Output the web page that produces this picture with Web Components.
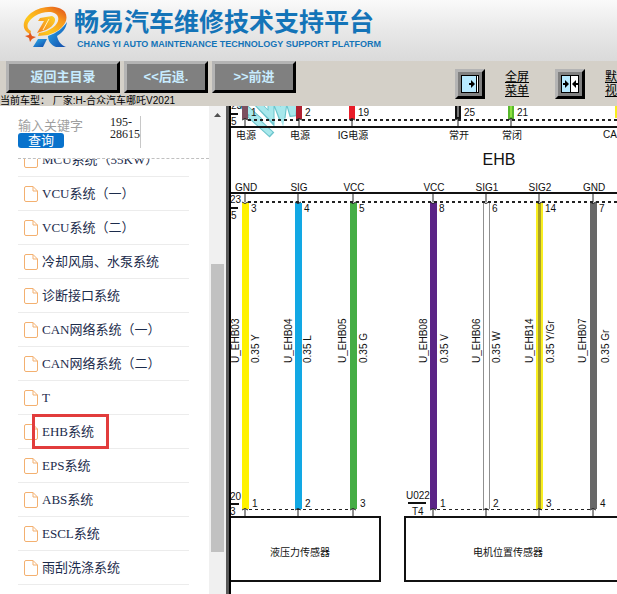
<!DOCTYPE html>
<html lang="zh-CN">
<head>
<meta charset="utf-8">
<meta name="viewport" content="width=device-width, initial-scale=1">
<title>畅易汽车维修技术支持平台</title>
<style>
  body {
    margin: 0;
    height: 100vh;
    overflow: hidden;
    background: #fff;
    font-family: "Liberation Sans", "Noto Sans CJK SC", sans-serif;
  }
</style>
</head>
<body>
<manual-app></manual-app>

<script>
// Header with the logo and the name of the platform
class ManualHeader extends HTMLElement {
  constructor() {
    super();
    this.attachShadow({ mode: 'open' });
  }

  connectedCallback() {
    this.shadowRoot.innerHTML = `
      <style>
        :host {
          display: flex;
          align-items: flex-start;
          gap: 5px;
          box-sizing: border-box;
          height: 61px;
          padding: 5px 0 0 22px;
          background: linear-gradient(#fafafa, #e8e8e8 50%, #dadada);
          color: #1474b8;
          white-space: nowrap;
        }
        svg { flex: none; width: 47px; height: 44px; }
        h1 {
          margin: 3px 0 0;
          font-size: 25px;
          line-height: 28px;
          font-weight: 700;
        }
        p {
          margin: 2px 0 0 3px;
          font-size: 9px;
          line-height: 12px;
          font-weight: 700;
        }
      </style>
      <svg viewBox="0 0 47 44" aria-hidden="true">
        <defs>
          <linearGradient id="sun" x1="0" y1="1" x2="1" y2="0">
            <stop offset="0" stop-color="#f6901c"/>
            <stop offset=".35" stop-color="#fdc81c"/>
            <stop offset=".7" stop-color="#f8981c"/>
            <stop offset="1" stop-color="#dc481c"/>
          </linearGradient>
          <linearGradient id="gold" x1="0" y1="1" x2="1" y2="0">
            <stop offset="0" stop-color="#f47c1c"/>
            <stop offset="1" stop-color="#fdd428"/>
          </linearGradient>
          <linearGradient id="sea" x1="0" y1="0" x2="1" y2="1">
            <stop offset="0" stop-color="#2bb0ee"/>
            <stop offset="1" stop-color="#1248a8"/>
          </linearGradient>
        </defs>
        <path fill="url(#sea)" d="M16 34h9l-4 8H11z"/>
        <path fill="url(#sea)" d="M45 17C44 24 40 28 35 31C36 36 39 40 44 42H34C29 40 26 36 26 31C35 28 41 23 45 17z"/>
        <path fill="url(#sun)" d="M8 29C-1 25 0 15 9 8C20 0 37 0 43 7C48 16 40 26 26 30L16 31L17 28C30 26 38 18 36 12C34 5 21 6 13 11C5 16 3 23 9 26z"/>
        <path fill="url(#gold)" d="M18 13L30 11C36 13 33 21 24 25L15 28L22 16H16z"/>
        <path fill="none" stroke="#fff3c4" d="M27 14l-6 11"/>
        <path fill="#e2571c" d="M8 27l2 4 4 1-4 2-2 3-1-4-4-2 4-1z"/>
      </svg>
      <div>
        <h1>畅易汽车维修技术支持平台</h1>
        <p>CHANG YI AUTO MAINTENANCE TECHNOLOGY SUPPORT PLATFORM</p>
      </div>
    `;
  }
}
customElements.define('manual-header', ManualHeader);

// Raised grey button. With the "icon" attribute it becomes a small square.
class BevelButton extends HTMLElement {
  constructor() {
    super();
    this.attachShadow({ mode: 'open' });
  }

  connectedCallback() {
    const label = this.getAttribute('label') ?? '';
    this.shadowRoot.innerHTML = `
      <style>
        :host { display: block; }
        button {
          display: flex;
          align-items: center;
          justify-content: center;
          box-sizing: border-box;
          width: 100%;
          height: 32px;
          padding: 0;
          border: 3px solid;
          border-color: #b4b4b4 #000 #000 #b4b4b4;
          background: #808080;
          color: #c8ecff;
          font: 700 13px/16px "Liberation Sans", "Noto Sans CJK SC", sans-serif;
        }
        :host([icon]) button { width: 30px; height: 30px; }
      </style>
      <button type="button" ${label ? `aria-label="${label}"` : ''}><slot></slot></button>
    `;
  }
}
customElements.define('bevel-button', BevelButton);

class ManualToolbar extends HTMLElement {
  constructor() {
    super();
    this.attachShadow({ mode: 'open' });
  }

  connectedCallback() {
    this.shadowRoot.innerHTML = `
      <style>
        :host {
          display: flex;
          justify-content: space-between;
          height: 45px;
          overflow: hidden;
          background: #d4d0c8;
          color: #000;
        }
        nav {
          display: grid;
          grid-template-columns: 114px 84px 84px;
          gap: 4px;
          padding-left: 6px;
        }
        p {
          margin: 2px 0 0;
          font-size: 10px;
          line-height: 12px;
        }
        .views {
          display: flex;
          align-items: flex-start;
          gap: 20px;
          padding-top: 8px;
        }
        .views bevel-button + a + bevel-button { margin-left: 6px; }
        a {
          margin-top: 1px;
          color: #000;
          font-size: 12px;
          line-height: 14px;
        }
      </style>
      <div>
        <nav>
          <bevel-button>返回主目录</bevel-button>
          <bevel-button>&lt;&lt;后退.</bevel-button>
          <bevel-button>&gt;&gt;前进</bevel-button>
        </nav>
        <p>当前车型： 厂家:H-合众汽车哪吒V2021</p>
      </div>
      <div class="views">
        <bevel-button icon label="全屏菜单">
          <svg width="18" height="18" viewBox="0 0 18 18">
            <rect width="18" height="18" fill="#000"/>
            <rect x="1" y="1" width="14" height="16" fill="#b8eaff"/>
            <rect x="16" y="1" width="1" height="16" fill="#fff"/>
            <path d="M8 8h2V5l4 4-4 4v-3H8z"/>
          </svg>
        </bevel-button>
        <a href="#full">全屏<br>菜单</a>
        <bevel-button icon label="默认视图">
          <svg width="18" height="18" viewBox="0 0 18 18">
            <rect width="18" height="18" fill="#000"/>
            <rect x="1" y="1" width="8" height="16" fill="#b8eaff"/>
            <rect x="10" y="1" width="7" height="16" fill="#fff"/>
            <path d="M2 8h2V5l4 4-4 4v-3H2zM17 8h-2V5l-4 4 4 4v-3h2z"/>
          </svg>
        </bevel-button>
        <a href="#default">默<br>视</a>
      </div>
    `;
  }
}
customElements.define('manual-toolbar', ManualToolbar);

// One entry of the circuit list. "marked" draws the red frame round it.
class CircuitItem extends HTMLElement {
  constructor() {
    super();
    this.attachShadow({ mode: 'open' });
  }

  connectedCallback() {
    this.shadowRoot.innerHTML = `
      <style>
        :host {
          display: block;
          position: relative;
          box-sizing: border-box;
          height: 34px;
          border-bottom: 1px solid #ececec;
        }
        a {
          display: flex;
          align-items: center;
          gap: 4px;
          height: 33px;
          padding-left: 6px;
          color: #1c2c4c;
          font: 13px/18px "Liberation Serif", "Noto Sans CJK SC", serif;
          text-decoration: none;
          white-space: nowrap;
        }
        :host([marked])::after {
          content: "";
          position: absolute;
          top: -1px;
          left: 14px;
          width: 71px;
          height: 29px;
          border: 3px solid #e23c3c;
        }
      </style>
      <a href="#circuit">
        <svg width="14" height="16" viewBox="0 0 14 16" fill="none" stroke="#f3b070" aria-hidden="true">
          <path d="M2 .5h7l4.500 4.500v9q0 1.500-1.500 1.500h-10q-1.500 0-1.500-1.500v-12q0-1.500 1.500-1.500zM9 .5v4.500h4.500"/>
        </svg>
        <slot></slot>
      </a>
    `;
  }
}
customElements.define('circuit-item', CircuitItem);

class ManualSidebar extends HTMLElement {
  constructor() {
    super();
    this.attachShadow({ mode: 'open' });
  }

  connectedCallback() {
    this.shadowRoot.innerHTML = `
      <style>
        :host {
          display: grid;
          grid-template-columns: 1fr 17px;
          width: 226px;
          min-height: 0;
          border-right: 3px solid #585858;
        }
        .panel {
          display: flex;
          flex-direction: column;
          min-height: 0;
          padding-left: 18px;
        }
        form {
          display: flex;
          gap: 12px;
          padding: 10px 0;
          border-bottom: 1px dashed #c0c0c0;
        }
        .field { width: 80px; padding-top: 2px; }
        input {
          display: block;
          box-sizing: border-box;
          width: 100%;
          height: 15px;
          padding: 0;
          border: 0;
          background: none;
          font: 13px/15px "Liberation Sans", "Noto Sans CJK SC", sans-serif;
        }
        input::placeholder { color: #a0a0a0; }
        button {
          display: block;
          width: 46px;
          height: 15px;
          padding: 0;
          border: 0;
          border-radius: 3px;
          background: #0872cc;
          color: #fff;
          font: 13px/15px "Liberation Sans", "Noto Sans CJK SC", sans-serif;
        }
        .range {
          width: 30px;
          height: 32px;
          border-right: 1px solid #c8c8c8;
          color: #222;
          font: 12px/12px "Liberation Serif", serif;
        }
        .scroller { flex: 1; min-height: 0; overflow: hidden; }
        /* the list is scrolled a little way into its first row */
        .list { margin: -16px 20px 0 0; }
        .bar {
          display: grid;
          grid-template-rows: 17px 141fr 288fr 42fr;
          justify-items: center;
          background: #f0f0f0;
        }
        .bar svg { align-self: center; }
        .thumb { grid-row: 3; width: 13px; background: #c1c1c1; }
      </style>
      <div class="panel">
        <form>
          <div class="field">
            <input type="text" placeholder="输入关键字" aria-label="输入关键字">
            <button type="button">查询</button>
          </div>
          <div class="range">195-28615</div>
        </form>
        <div class="scroller">
          <div class="list">
            <circuit-item>MCU系统（55KW）</circuit-item>
            <circuit-item>VCU系统（一）</circuit-item>
            <circuit-item>VCU系统（二）</circuit-item>
            <circuit-item>冷却风扇、水泵系统</circuit-item>
            <circuit-item>诊断接口系统</circuit-item>
            <circuit-item>CAN网络系统（一）</circuit-item>
            <circuit-item>CAN网络系统（二）</circuit-item>
            <circuit-item>T</circuit-item>
            <circuit-item marked>EHB系统</circuit-item>
            <circuit-item>EPS系统</circuit-item>
            <circuit-item>ABS系统</circuit-item>
            <circuit-item>ESCL系统</circuit-item>
            <circuit-item>雨刮洗涤系统</circuit-item>
          </div>
        </div>
      </div>
      <div class="bar" aria-hidden="true">
        <svg width="7" height="4" viewBox="0 0 7 4"><path fill="#505050" d="M3.500 0L7 4H0z"/></svg>
        <div class="thumb"></div>
      </div>
    `;
  }
}
customElements.define('manual-sidebar', ManualSidebar);

// pin is the number on the module, end the number on the sensor
const WIRES = [
  { x: 245, color: '#fff200', name: 'U_EHB03', size: '0.35 Y', pin: 3, end: 1, signal: 'GND', nameX: 239, sizeX: 259 },
  { x: 298, color: '#12a8e4', name: 'U_EHB04', size: '0.35 L', pin: 4, end: 2, signal: 'SIG', nameX: 292, sizeX: 311 },
  { x: 353, color: '#45ad45', name: 'U_EHB05', size: '0.35 G', pin: 5, end: 3, signal: 'VCC', nameX: 346, sizeX: 367 },
  { x: 433, color: '#5b2486', name: 'U_EHB08', size: '0.35 V', pin: 8, end: 1, signal: 'VCC', nameX: 427, sizeX: 448 },
  { x: 486, color: '#909090', core: '#fff', coreWidth: 5, name: 'U_EHB06', size: '0.35 W', pin: 6, end: 2, signal: 'SIG1', nameX: 480, sizeX: 500 },
  { x: 539, color: '#f8ee20', core: '#aaa028', coreWidth: 3, name: 'U_EHB14', size: '0.35 Y/Gr', pin: 14, end: 3, signal: 'SIG2', nameX: 533, sizeX: 554 },
  { x: 593, color: '#686868', name: 'U_EHB07', size: '0.35 Gr', pin: 7, end: 4, signal: 'GND', nameX: 586, sizeX: 609 }
];

const SUPPLIES = [
  { x: 245, color: '#7c5060', pin: 1, label: '电源' },
  { x: 299, color: '#b02030', pin: 2, label: '电源' },
  { x: 352, color: '#e81c28', pin: 19, label: 'IG电源' },
  { x: 458, color: '#111', core: '#777', pin: 25, label: '常开' },
  { x: 511, color: '#58b82c', core: '#8ee040', pin: 21, label: '常闭' }
];

class WiringDiagram extends HTMLElement {
  constructor() {
    super();
    this.attachShadow({ mode: 'open' });
  }

  supply({ x, color, core, pin, label }) {
    return `
      <rect x="${x - 3}" y="100" width="6" height="19" fill="${color}"/>
      ${core ? `<rect x="${x - 1}" y="100" width="2" height="17" fill="${core}"/>` : ''}
      <path class="pin" d="M${x - 3} 120q3-3 6 0M${x} 119v8"/>
      <text x="${x + 6}" y="116">${pin}</text>
      <text class="mid" x="${x + 1}" y="139">${label}</text>
    `;
  }

  wire({ x, color, core, coreWidth, name, size, pin, end, signal, nameX, sizeX }) {
    return `
      <rect x="${x - 3}" y="203" width="7" height="306" fill="${color}"/>
      ${core ? `<rect x="${x - (coreWidth - 1) / 2}" y="203" width="${coreWidth}" height="306" fill="${core}"/>` : ''}
      <path class="pin" d="M${x} 194v8M${x - 3} 202q3 3 6 0M${x - 3} 510q3-3 6 0M${x} 509v8"/>
      <text class="mid" x="${x + 1}" y="191">${signal}</text>
      <text x="${x + 6}" y="212">${pin}</text>
      <text x="${x + 7}" y="507">${end}</text>
      <text transform="translate(${nameX} 363) rotate(-90)">${name}</text>
      <text transform="translate(${sizeX} 363) rotate(-90)">${size}</text>
    `;
  }

  connectedCallback() {
    this.shadowRoot.innerHTML = `
      <style>
        :host {
          display: block;
          overflow: hidden;
          border-left: 2px solid #000;
          background: #fff;
        }
        svg { display: block; width: 100%; }
        text {
          fill: #111;
          font: 10px "Liberation Sans", "Noto Sans CJK SC", sans-serif;
        }
        .mid { text-anchor: middle; }
        .title { font-size: 16px; }
        .line { fill: none; stroke: #111; stroke-width: 2; }
        .dash { fill: none; stroke: #222; stroke-dasharray: 3 3; }
        .heavy { stroke-width: 2; }
        .pin { fill: none; stroke: #222; stroke-width: 1; }
        .mark { fill: none; stroke: #6cc4cc; stroke-width: 7; }
        .mark.inner { stroke: #a8e8ec; stroke-width: 5; }
      </style>
      <svg viewBox="231 106 386 488" role="img" aria-label="EHB">
        <path class="mark" d="M240 103l20 18M249 114l23 21M256 102l15 16V102M276 102l6 16 2-16M289 102l4 14 1-14"/>
        <path class="mark inner" d="M240 103l20 18M250 115l21 19M256 102l15 15V102M276 102l6 15 2-15M289 102l4 13 1-13"/>
        ${SUPPLIES.map(this.supply).join('')}
        <path class="dash heavy" d="M248 120H617"/>
        <path class="line" d="M231 127H617M231 114h7"/>
        <text x="231" y="109">23</text>
        <text x="231" y="125">5</text>
        <rect x="615" y="100" width="6" height="18" fill="#f8ee20"/>
        <text x="603" y="138">CAN</text>

        <text class="title mid" x="499" y="165">EHB</text>

        <path class="line" d="M231 193H617M231 208h7"/>
        <path class="dash heavy" d="M248 202H617"/>
        <text x="230" y="203">23</text>
        <text x="231" y="219">5</text>
        ${WIRES.map(this.wire).join('')}
        <path class="dash" d="M249 509.500H350M437 509.500H590"/>

        <path class="line" d="M231 504h8M408 503h18"/>
        <text x="230" y="500">20</text>
        <text x="230" y="515">3</text>
        <text x="406" y="499">U022</text>
        <text x="412" y="515">T4</text>

        <rect class="line" x="220" y="517" width="160" height="64"/>
        <text class="mid" x="300" y="556">液压力传感器</text>
        <rect class="line" x="405" y="517" width="230" height="64"/>
        <text class="mid" x="508" y="556">电机位置传感器</text>
      </svg>
    `;
  }
}
customElements.define('wiring-diagram', WiringDiagram);

class ManualApp extends HTMLElement {
  constructor() {
    super();
    this.attachShadow({ mode: 'open' });
  }

  connectedCallback() {
    this.shadowRoot.innerHTML = `
      <style>
        :host {
          display: grid;
          grid-template-rows: auto auto 1fr;
          height: 100%;
        }
        main {
          display: grid;
          grid-template-columns: auto 1fr;
          min-height: 0;
        }
      </style>
      <manual-header></manual-header>
      <manual-toolbar></manual-toolbar>
      <main>
        <manual-sidebar></manual-sidebar>
        <wiring-diagram></wiring-diagram>
      </main>
    `;
  }
}
customElements.define('manual-app', ManualApp);
</script>
</body>
</html>
